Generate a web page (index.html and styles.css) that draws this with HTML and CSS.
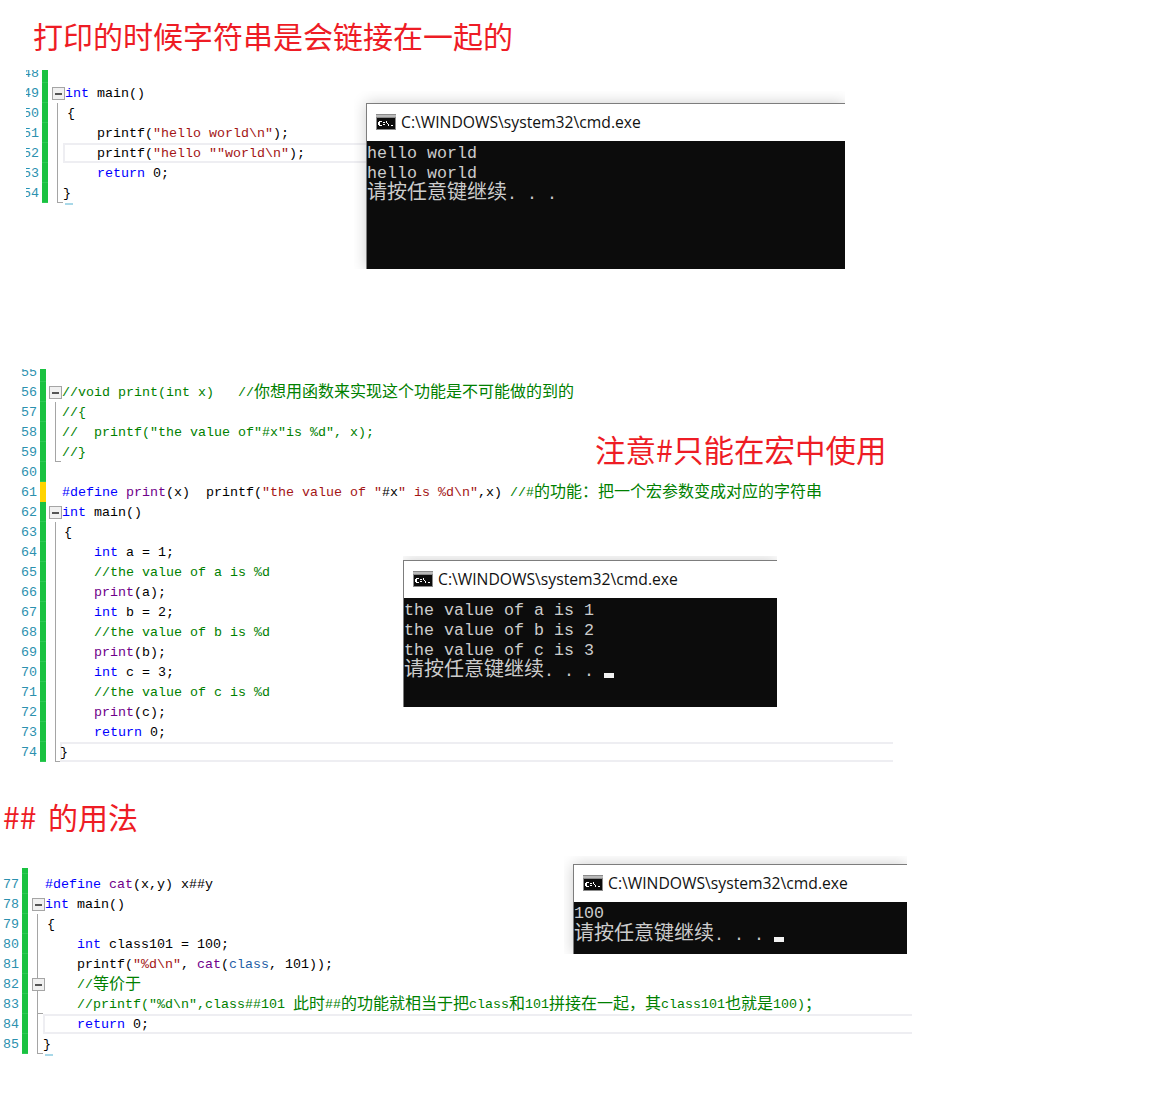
FILE: index.html
```html
<!DOCTYPE html>
<html lang="zh">
<head>
<meta charset="utf-8">
<title>宏与字符串</title>
<link rel="stylesheet" href="styles.css">
</head>
<body>
<main class="page">

<section class="sec sec1">
  <h1 class="title title1">打印的时候字符串是会链接在一起的</h1>
  <div class="editor ed1">
    <div class="lines">
      <div class="line"><span class="num">48</span><span class="bar"></span><span class="fold"></span><span class="code"></span></div>
      <div class="line"><span class="num">49</span><span class="bar"></span><span class="fold box"></span><span class="code"><b class="kw">int</b> main()</span></div>
      <div class="line"><span class="num">50</span><span class="bar"></span><span class="fold v"></span><span class="code"><span class="open">{</span></span></div>
      <div class="line"><span class="num">51</span><span class="bar"></span><span class="fold v"></span><span class="code">    printf(<b class="str">"hello world\n"</b>);</span></div>
      <div class="line"><span class="num">52</span><span class="bar"></span><span class="fold v"></span><span class="code hl">    printf(<b class="str">"hello ""world\n"</b>);</span></div>
      <div class="line"><span class="num">53</span><span class="bar"></span><span class="fold v"></span><span class="code">    <b class="kw">return</b> 0;</span></div>
      <div class="line"><span class="num">54</span><span class="bar"></span><span class="fold end"></span><span class="code mark"><span class="close">}</span></span></div>
    </div>
  </div>
  <div class="clip clip1">
    <div class="console">
      <div class="titlebar">
        <svg class="cmd" viewBox="0 0 20 16"><rect width="20" height="16" fill="#8b8b8b"/><rect y="1" width="20" height="2" fill="#b9b9b9"/><rect x="1" y="4" width="18" height="11" fill="#0c0c0c"/><path d="M3 7h3v1H3zM2 8h2v3H2zM3 11h3v1H3zM7 8h2v1H7zM7 10h2v1H7zM10 7h1v2h-1zM11 9h1v1h-1zM12 10h1v2h-1zM15 11h2v1h-2z" fill="#fff"/></svg>
        <span class="wintitle">C:\WINDOWS\system32\cmd.exe</span>
      </div>
      <div class="out out1">
        <div class="row">hello world</div>
        <div class="row">hello world</div>
        <div class="row zh"><span class="zhc">请按任意键继续</span>. . .</div>
      </div>
    </div>
  </div>
</section>

<section class="sec sec2">
  <div class="editor ed2">
    <div class="lines">
      <div class="line"><span class="num">55</span><span class="bar"></span><span class="fold"></span><span class="code"></span></div>
      <div class="line"><span class="num">56</span><span class="bar"></span><span class="fold box"></span><span class="code"><b class="com">//void print(int x)   //<span class="zhe">你想用函数来实现这个功能是不可能做的到的</span></b></span></div>
      <div class="line"><span class="num">57</span><span class="bar"></span><span class="fold v"></span><span class="code"><b class="com">//{</b></span></div>
      <div class="line"><span class="num">58</span><span class="bar"></span><span class="fold v"></span><span class="code"><b class="com">//  printf("the value of"#x"is %d", x);</b></span></div>
      <div class="line"><span class="num">59</span><span class="bar"></span><span class="fold end"></span><span class="code"><b class="com">//}</b></span></div>
      <div class="line"><span class="num">60</span><span class="bar"></span><span class="fold"></span><span class="code"></span></div>
      <div class="line"><span class="num">61</span><span class="bar warn"></span><span class="fold"></span><span class="code"><b class="kw">#define</b> <b class="mac">print</b>(x)  printf(<b class="str">"the value of "</b>#x<b class="str">" is %d\n"</b>,x) <b class="com">//#<span class="zhe">的功能：把一个宏参数变成对应的字符串</span></b></span></div>
      <div class="line"><span class="num">62</span><span class="bar"></span><span class="fold box"></span><span class="code"><b class="kw">int</b> main()</span></div>
      <div class="line"><span class="num">63</span><span class="bar"></span><span class="fold v"></span><span class="code"><span class="open">{</span></span></div>
      <div class="line"><span class="num">64</span><span class="bar"></span><span class="fold v"></span><span class="code">    <b class="kw">int</b> a = 1;</span></div>
      <div class="line"><span class="num">65</span><span class="bar"></span><span class="fold v"></span><span class="code">    <b class="com">//the value of a is %d</b></span></div>
      <div class="line"><span class="num">66</span><span class="bar"></span><span class="fold v"></span><span class="code">    <b class="mac">print</b>(a);</span></div>
      <div class="line"><span class="num">67</span><span class="bar"></span><span class="fold v"></span><span class="code">    <b class="kw">int</b> b = 2;</span></div>
      <div class="line"><span class="num">68</span><span class="bar"></span><span class="fold v"></span><span class="code">    <b class="com">//the value of b is %d</b></span></div>
      <div class="line"><span class="num">69</span><span class="bar"></span><span class="fold v"></span><span class="code">    <b class="mac">print</b>(b);</span></div>
      <div class="line"><span class="num">70</span><span class="bar"></span><span class="fold v"></span><span class="code">    <b class="kw">int</b> c = 3;</span></div>
      <div class="line"><span class="num">71</span><span class="bar"></span><span class="fold v"></span><span class="code">    <b class="com">//the value of c is %d</b></span></div>
      <div class="line"><span class="num">72</span><span class="bar"></span><span class="fold v"></span><span class="code">    <b class="mac">print</b>(c);</span></div>
      <div class="line"><span class="num">73</span><span class="bar"></span><span class="fold v"></span><span class="code">    <b class="kw">return</b> 0;</span></div>
      <div class="line"><span class="num">74</span><span class="bar"></span><span class="fold end"></span><span class="code hl"><span class="close">}</span></span></div>
    </div>
  </div>
  <p class="title note">注意#只能在宏中使用</p>
  <div class="clip clip2">
    <div class="console">
      <div class="titlebar">
        <svg class="cmd" viewBox="0 0 20 16"><rect width="20" height="16" fill="#8b8b8b"/><rect y="1" width="20" height="2" fill="#b9b9b9"/><rect x="1" y="4" width="18" height="11" fill="#0c0c0c"/><path d="M3 7h3v1H3zM2 8h2v3H2zM3 11h3v1H3zM7 8h2v1H7zM7 10h2v1H7zM10 7h1v2h-1zM11 9h1v1h-1zM12 10h1v2h-1zM15 11h2v1h-2z" fill="#fff"/></svg>
        <span class="wintitle">C:\WINDOWS\system32\cmd.exe</span>
      </div>
      <div class="out out2">
        <div class="row">the value of a is 1</div>
        <div class="row">the value of b is 2</div>
        <div class="row">the value of c is 3</div>
        <div class="row zh"><span class="zhc">请按任意键继续</span>. . . <i class="cursor"></i></div>
      </div>
    </div>
  </div>
</section>

<section class="sec sec3">
  <h2 class="title title3">## 的用法</h2>
  <div class="editor ed3">
    <div class="lines">
      <div class="line"><span class="num">76</span><span class="bar"></span><span class="fold"></span><span class="code"></span></div>
      <div class="line"><span class="num">77</span><span class="bar"></span><span class="fold"></span><span class="code"><b class="kw">#define</b> <b class="mac">cat</b>(x,y) x##y</span></div>
      <div class="line"><span class="num">78</span><span class="bar"></span><span class="fold box"></span><span class="code"><b class="kw">int</b> main()</span></div>
      <div class="line"><span class="num">79</span><span class="bar"></span><span class="fold v"></span><span class="code"><span class="open">{</span></span></div>
      <div class="line"><span class="num">80</span><span class="bar"></span><span class="fold v"></span><span class="code">    <b class="kw">int</b> class101 = 100;</span></div>
      <div class="line"><span class="num">81</span><span class="bar"></span><span class="fold v"></span><span class="code">    printf(<b class="str">"%d\n"</b>, <b class="mac">cat</b>(<b class="arg">class</b>, 101));</span></div>
      <div class="line"><span class="num">82</span><span class="bar"></span><span class="fold box v"></span><span class="code">    <b class="com">//<span class="zhe">等价于</span></b></span></div>
      <div class="line"><span class="num">83</span><span class="bar"></span><span class="fold end"></span><span class="code">    <b class="com">//printf("%d\n",class##101 <span class="zhe">此时</span>##<span class="zhe">的功能就相当于把</span>class<span class="zhe">和</span>101<span class="zhe">拼接在一起，其</span>class101<span class="zhe">也就是</span>100)<span class="zhe">；</span></b></span></div>
      <div class="line"><span class="num">84</span><span class="bar"></span><span class="fold v"></span><span class="code hl">    <b class="kw">return</b> 0;</span></div>
      <div class="line"><span class="num">85</span><span class="bar"></span><span class="fold end"></span><span class="code mark"><span class="close">}</span></span></div>
    </div>
  </div>
  <div class="clip clip3">
    <div class="console">
      <div class="titlebar">
        <svg class="cmd" viewBox="0 0 20 16"><rect width="20" height="16" fill="#8b8b8b"/><rect y="1" width="20" height="2" fill="#b9b9b9"/><rect x="1" y="4" width="18" height="11" fill="#0c0c0c"/><path d="M3 7h3v1H3zM2 8h2v3H2zM3 11h3v1H3zM7 8h2v1H7zM7 10h2v1H7zM10 7h1v2h-1zM11 9h1v1h-1zM12 10h1v2h-1zM15 11h2v1h-2z" fill="#fff"/></svg>
        <span class="wintitle">C:\WINDOWS\system32\cmd.exe</span>
      </div>
      <div class="out out3">
        <div class="row">100</div>
        <div class="row zh"><span class="zhc">请按任意键继续</span>. . . <i class="cursor"></i></div>
      </div>
    </div>
  </div>
</section>

</main>
</body>
</html>
```
FILE: styles.css
```css
* { box-sizing: border-box; }
html, body { margin: 0; padding: 0; background: #fff; }
.page { width: 1171px; height: 1120px; overflow: hidden; }

.sec { position: relative; }
.sec1 { height: 369px; }
.sec2 { height: 393px; }
.sec3 { height: 358px; }

.title {
  margin: 0;
  font-family: "Noto Sans CJK SC", "Noto Sans", sans-serif;
  font-weight: 400;
  color: #ee1c25;
  white-space: nowrap;
}
.title1 { height: 70px; padding-left: 33px; font-size: 30px; line-height: 71px; }
.title3 { height: 106px; padding-left: 3px; font-size: 30px; line-height: 108px; word-spacing: 5px; }
.note {
  position: absolute;
  left: 595px;
  top: 58px;
  font-size: 30.5px;
  line-height: 44px;
}

.editor { overflow: hidden; }
.ed1 { height: 136px; margin-left: 26px; width: 340px; }
.ed2 { height: 393px; margin-left: 20px; width: 873px; }
.ed3 { height: 190px; width: 912px; }
.ed1 .lines { margin-top: -7px; }
.ed2 .lines { margin-top: -7px; }
.ed3 .lines { margin-top: -14px; }

.line {
  display: flex;
  height: 20px;
  font-family: "Liberation Mono", "Noto Sans CJK SC", monospace;
  font-size: 13.33px;
  line-height: 22px;
  color: #000;
  white-space: pre;
}
.line b { font-weight: 400; }

.num {
  display: flex;
  justify-content: flex-end;
  overflow: hidden;
  flex: none;
  color: #2b91af;
}
.ed1 .num { width: 13px; margin-right: 3px; }
.ed2 .num { width: 17px; margin-right: 3px; }
.ed3 .num { width: 19px; margin-right: 3px; }

.bar {
  flex: none;
  width: 6px;
  background: #1ac241;
  border-bottom: 1px solid #2fc955;
}
.bar.warn { background: #ffd400; border-bottom-color: #ffd400; }

.fold { flex: none; position: relative; width: 17px; }
.ed2 .fold { width: 16px; }
.fold.v::before,
.fold.end::before {
  content: "";
  position: absolute;
  left: 9px;
  top: 0;
  width: 1px;
  height: 100%;
  background: #a5a5a5;
}
.fold.end::after {
  content: "";
  position: absolute;
  left: 9px;
  bottom: 0;
  width: 6px;
  height: 1px;
  background: #a5a5a5;
}
.fold.box::after {
  content: "";
  position: absolute;
  left: 4px;
  top: 4px;
  width: 11px;
  height: 11px;
  border: 1px solid #a5a5a5;
  background: linear-gradient(#555, #555) center / 7px 2px no-repeat #f0f0f0;
}
.ed2 .fold.box::after { left: 3px; }

.code { flex: 1; min-width: 0; position: relative; }
.hl {
  height: 20px;
  border: 2px solid #eeeef2;
  border-right: 0;
  line-height: 18px;
  margin-left: -2px;
}
.mark::after {
  content: "";
  position: absolute;
  left: 0;
  bottom: -2px;
  width: 8px;
  height: 2px;
  background: #a8d8e8;
}
.open { margin-left: 2px; }
.close { margin-left: -2px; }
.kw { color: #0000ff; }
.str { color: #a31515; }
.com { color: #008000; }
.mac { color: #6f008a; }
.arg { color: #1f5fa6; }
.zhe {
  font-family: "Noto Sans CJK SC", sans-serif;
  font-size: 16px;
  line-height: 0;
  vertical-align: -1px;
}

.clip { position: absolute; overflow: hidden; }
.clip1 { left: 354px; top: 91px; width: 491px; height: 178px; padding: 12px 0 0 12px; }
.clip2 { left: 403px; top: 187px; width: 374px; height: 151px; padding-top: 4px; }
.clip3 { left: 564px; top: 94px; width: 343px; height: 98px; padding: 8px 0 0 9px; }

.console {
  height: 100%;
  background: #fff;
  border-top: 1px solid #7d7d7d;
  border-left: 1px solid #7d7d7d;
  box-shadow: 0 0 14px rgba(0, 0, 0, .2);
  display: flex;
  flex-direction: column;
}
.titlebar {
  flex: none;
  height: 37px;
  display: flex;
  align-items: center;
  gap: 5px;
  padding: 0 0 1px 9px;
}
.cmd { flex: none; width: 20px; height: 16px; }
.wintitle {
  font-family: "Open Sans", "Noto Sans", sans-serif;
  font-size: 15.7px;
  color: #111;
  white-space: nowrap;
}
.out {
  flex: 1;
  background: #0c0c0c;
  color: #cccccc;
  font-family: "Liberation Mono", monospace;
  font-size: 16.67px;
  line-height: 20px;
  padding-top: 3px;
}
.out3 { padding-top: 2px; }
.row { height: 20px; white-space: pre; }
.row.zh { margin-top: 1px; }
.out3 .zh { margin-top: 2px; }
.zhc { font-family: "Noto Sans CJK SC", sans-serif; font-size: 20px; line-height: 0; }
.cursor {
  display: inline-block;
  width: 10px;
  height: 5px;
  background: #f2f2f2;
  vertical-align: -2px;
}
```
